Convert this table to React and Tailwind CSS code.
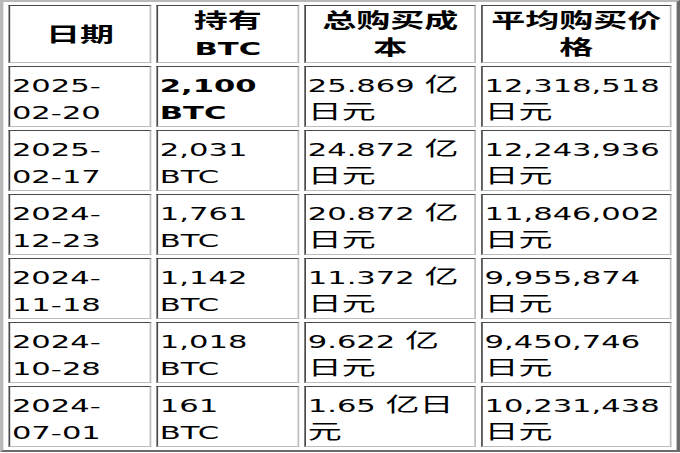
import React from 'react';

const purchases = [
    { date: "2025-\n02-20", btc: "2,100\nBTC", cost: "25.869 亿\n日元", avg: "12,318,518\n日元", latest: true },
    { date: "2025-\n02-17", btc: "2,031\nBTC", cost: "24.872 亿\n日元", avg: "12,243,936\n日元" },
    { date: "2024-\n12-23", btc: "1,761\nBTC", cost: "20.872 亿\n日元", avg: "11,846,002\n日元" },
    { date: "2024-\n11-18", btc: "1,142\nBTC", cost: "11.372 亿\n日元", avg: "9,955,874\n日元" },
    { date: "2024-\n10-28", btc: "1,018\nBTC", cost: "9.622 亿\n日元", avg: "9,450,746\n日元" },
    { date: "2024-\n07-01", btc: "161\nBTC", cost: "1.65 亿日\n元", avg: "10,231,438\n日元" },
];

// CJK runs are set a little larger than the latin digits
const Mixed = ({ text }) => (
    <>
        {text.split(/([\u4e00-\u9fff]+)/).map((part, i) =>
            /[\u4e00-\u9fff]/.test(part)
                ? <span key={i} className="text-[20px]">{part}</span>
                : part
        )}
    </>
);

const cellBorder =
    "border border-t-[#4a4a4a] border-l-[#4a4a4a] border-r-[#bdbdbd] border-b-[#bdbdbd]";

const Th = ({ text }) => (
    <th className={`${cellBorder} h-[58px] px-[1px] pt-[2px] pb-0 text-center align-middle font-bold whitespace-pre-line`}>
        <Mixed text={text} />
    </th>
);

const Td = ({ text, bold }) => (
    <td className={`${cellBorder} px-[1px] pt-[4px] pb-0 text-left align-middle whitespace-pre-line ${bold ? "font-bold" : "font-normal"}`}>
        <Mixed text={text} />
    </td>
);

const App = () => {
    return (
        <div className="w-[680px] h-[453px] overflow-hidden bg-white">
            {/* the table is stretched sideways, as in the source picture */}
            <div className="w-[400px] origin-top-left scale-x-[1.7]">
                <table
                    className="w-[400px] table-fixed border-separate border-spacing-[3px] border-2 border-t-[#b9b9b9] border-l-[#b9b9b9] border-r-[#6b6b6b] border-b-[#6b6b6b] text-black text-[18px] leading-[27px]"
                    style={{ fontFamily: '"DejaVu Sans", "Noto Sans CJK SC", sans-serif' }}
                >
                    <colgroup>
                        <col className="w-[84px]" />
                        <col className="w-[84px]" />
                        <col className="w-[101px]" />
                        <col className="w-[112px]" />
                    </colgroup>
                    <thead>
                        <tr>
                            <Th text="日期" />
                            <Th text={"持有\nBTC"} />
                            <Th text={"总购买成\n本"} />
                            <Th text={"平均购买价\n格"} />
                        </tr>
                    </thead>
                    <tbody>
                        {purchases.map(p => (
                            <tr key={p.date} className="h-[61px]">
                                <Td text={p.date} />
                                <Td text={p.btc} bold={p.latest} />
                                <Td text={p.cost} />
                                <Td text={p.avg} />
                            </tr>
                        ))}
                    </tbody>
                </table>
            </div>
        </div>
    );
};

export default App;
